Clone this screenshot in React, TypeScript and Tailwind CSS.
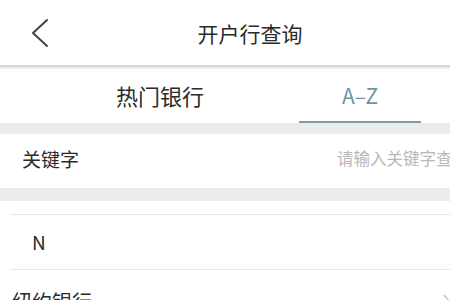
import React from "react";

const font = { fontFamily: '"Noto Sans CJK SC", "Noto Sans", sans-serif' };

export default function App() {
  return (
    <div className="w-[450px] h-[300px] overflow-hidden bg-white text-[#2b2b2b]" style={font}>
      {/* Header */}
      <div className="h-[65px] flex items-center">
        <div className="w-[80px] h-full flex items-center pl-[30px]">
          <svg width="20" height="30" viewBox="0 0 20 30" fill="none">
            <path d="M17 2 L3 15 L17 28" stroke="#444" strokeWidth="2" strokeLinecap="round" strokeLinejoin="round" />
          </svg>
        </div>
        <div className="flex-1 text-center text-[21px] leading-none pr-[30px] pt-[1px]">开户行查询</div>
      </div>
      <div className="h-[2px] bg-[#d6d6d6]" />
      <div className="h-[2px] bg-[#ececec]" />

      {/* Tabs */}
      <div className="h-[54px] flex">
        <div className="ml-[100px] w-[120px] flex items-center justify-center text-[22px] pb-[2px]">热门银行</div>
        <div className="ml-[79px] w-[122px] flex flex-col">
          <div className="flex-1 flex items-center justify-center text-[21px] text-[#6e93a3] pt-[2px]">A–Z</div>
          <div className="h-[2px] bg-[#7f9baa]" />
        </div>
      </div>
      <div className="h-[11px] bg-[#ececec]" />

      {/* Search */}
      <div className="h-[54px] flex items-center overflow-hidden whitespace-nowrap">
        <div className="pl-[22px] text-[19px] leading-none pb-[6px]">关键字</div>
        <div className="ml-[34px] w-px h-[36px] bg-[#e6e6e6] self-start mt-[5px]" />
        <div className="ml-[224px] text-[16.5px] text-[#b8b8b8] leading-none pb-[6px]">请输入关键字查询</div>
      </div>
      <div className="h-[13px] bg-[#ececec]" />

      {/* List */}
      <div className="h-[13px]" />
      <div className="ml-[10px] h-px bg-[#e8e8e8]" />
      <div className="h-[54px] flex items-center pl-[32px] text-[19px]">N</div>
      <div className="ml-[10px] h-px bg-[#e8e8e8]" />
      <div className="h-[54px] flex items-center pl-[12px] text-[20px] pt-[10px] justify-between">
        <span>纽约银行</span>
        <svg width="10" height="18" viewBox="0 0 10 18" fill="none" className="mr-[-2px]">
          <path d="M2 2 L8 9 L2 16" stroke="#c4c4c4" strokeWidth="1.5" />
        </svg>
      </div>
    </div>
  );
}
